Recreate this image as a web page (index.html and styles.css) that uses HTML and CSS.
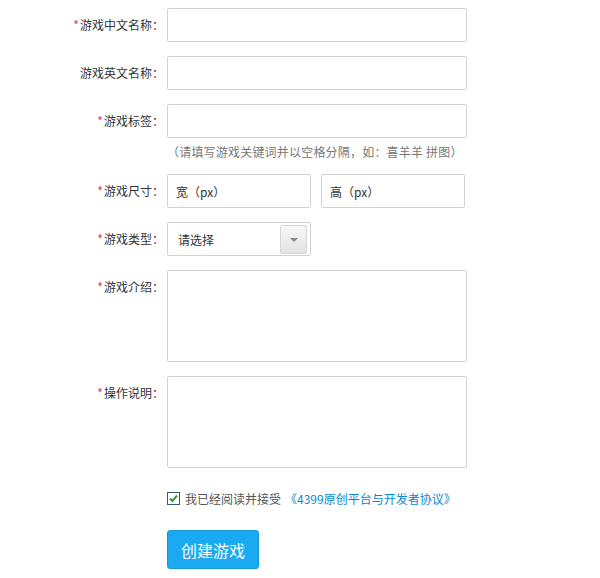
FILE: index.html
```html
<!DOCTYPE html>
<html lang="zh-CN">
<head>
    <meta charset="UTF-8">
    <meta name="viewport" content="width=device-width, initial-scale=1.0">
    <title>创建游戏</title>
    <link rel="stylesheet" href="styles.css">
</head>
<body>
    <form id="game-form">
        <div class="form-row">
            <label class="form-label"><span class="req">*</span>游戏中文名称</label>
            <div class="form-field"><input class="text-input" type="text"></div>
        </div>
        <div class="form-row">
            <label class="form-label">游戏英文名称</label>
            <div class="form-field"><input class="text-input" type="text"></div>
        </div>
        <div class="form-row">
            <label class="form-label"><span class="req">*</span>游戏标签</label>
            <div class="form-field">
                <input class="text-input" type="text">
                <p class="hint">（请填写游戏关键词并以空格分隔，如：喜羊羊 拼图）</p>
            </div>
        </div>
        <div class="form-row">
            <label class="form-label"><span class="req">*</span>游戏尺寸</label>
            <div class="form-field size-field">
                <input class="text-input small" type="text" value="宽（px）">
                <input class="text-input small" type="text" value="高（px）">
            </div>
        </div>
        <div class="form-row">
            <label class="form-label"><span class="req">*</span>游戏类型</label>
            <div class="form-field">
                <div class="select-box">
                    <span>请选择</span>
                    <span class="select-arrow"></span>
                </div>
            </div>
        </div>
        <div class="form-row">
            <label class="form-label"><span class="req">*</span>游戏介绍</label>
            <div class="form-field"><textarea class="text-area"></textarea></div>
        </div>
        <div class="form-row">
            <label class="form-label"><span class="req">*</span>操作说明</label>
            <div class="form-field"><textarea class="text-area"></textarea></div>
        </div>
        <div class="form-row agree-row">
            <div class="form-label blank"></div>
            <div class="form-field agree">
                <span class="check-box">
                    <svg width="11" height="11" viewBox="0 0 11 11"><path d="M2 5.5 L4.5 8 L9 2.5" fill="none" stroke="#2e9e3a" stroke-width="2"/></svg>
                </span>
                <span>我已经阅读并接受</span>
                <a href="#" class="agree-link">《4399原创平台与开发者协议》</a>
            </div>
        </div>
        <div class="form-row">
            <div class="form-label blank"></div>
            <div class="form-field"><button type="button" class="submit-btn">创建游戏</button></div>
        </div>
    </form>
</body>
</html>
```

FILE: styles.css
```css
* {
    box-sizing: border-box;
}
body {
    margin: 0;
    background: #fff;
    font-family: "Noto Sans CJK SC", "Liberation Sans", sans-serif;
    font-size: 12px;
    color: #333;
}
#game-form {
    padding-top: 8px;
}
.form-row {
    display: flex;
    gap: 3px;
    margin-bottom: 14px;
}
.form-label {
    width: 164px;
    flex-shrink: 0;
    text-align: right;
    line-height: 34px;
    white-space: nowrap;
}
.form-label::after {
    content: "：";
    font-family: "Noto Sans CJK JP", sans-serif;
}
.form-label.blank::after {
    content: none;
}
.req {
    color: #f33;
    margin-right: 1px;
}
.form-field {
    width: 300px;
}
.text-input {
    display: block;
    width: 300px;
    height: 34px;
    border: 1px solid #d2d2d2;
    border-radius: 2px;
    padding: 0 8px;
    font: inherit;
    color: #333;
    outline: none;
}
.text-input.small {
    width: 144px;
}
.size-field {
    display: flex;
    gap: 10px;
}
.hint {
    margin: 6px 0 0;
    line-height: 16px;
    color: #777;
    white-space: nowrap;
    letter-spacing: 0.2px;
}
.select-box {
    width: 144px;
    height: 34px;
    border: 1px solid #d2d2d2;
    border-radius: 2px;
    display: flex;
    align-items: center;
    justify-content: space-between;
    padding: 0 3px 0 10px;
}
.select-arrow {
    width: 27px;
    height: 29px;
    border: 1px solid #d6d6d6;
    border-radius: 2px;
    background: linear-gradient(#f7f7f7, #e2e2e2);
    position: relative;
}
.select-arrow::after {
    content: "";
    position: absolute;
    left: 9px;
    top: 12px;
    border-left: 4px solid transparent;
    border-right: 4px solid transparent;
    border-top: 4px solid #888;
}
.text-area {
    display: block;
    width: 300px;
    height: 92px;
    border: 1px solid #d2d2d2;
    border-radius: 2px;
    resize: none;
    outline: none;
    font: inherit;
}
.agree-row {
    margin-bottom: 16px;
}
.agree {
    display: flex;
    align-items: center;
    height: 32px;
    white-space: nowrap;
    color: #555;
}
.check-box {
    width: 13px;
    height: 13px;
    border: 1px solid #3c5a6e;
    display: flex;
    align-items: center;
    justify-content: center;
    margin-right: 5px;
    background: #fff;
}
.agree-link {
    color: #0a88d0;
    text-decoration: none;
    margin-left: 4px;
}
.submit-btn {
    width: 92px;
    height: 39px;
    border: 1px solid #1597d8;
    border-radius: 3px;
    background: #19aaf1;
    color: #fff;
    font: inherit;
    font-size: 16px;
    cursor: pointer;
}
```
